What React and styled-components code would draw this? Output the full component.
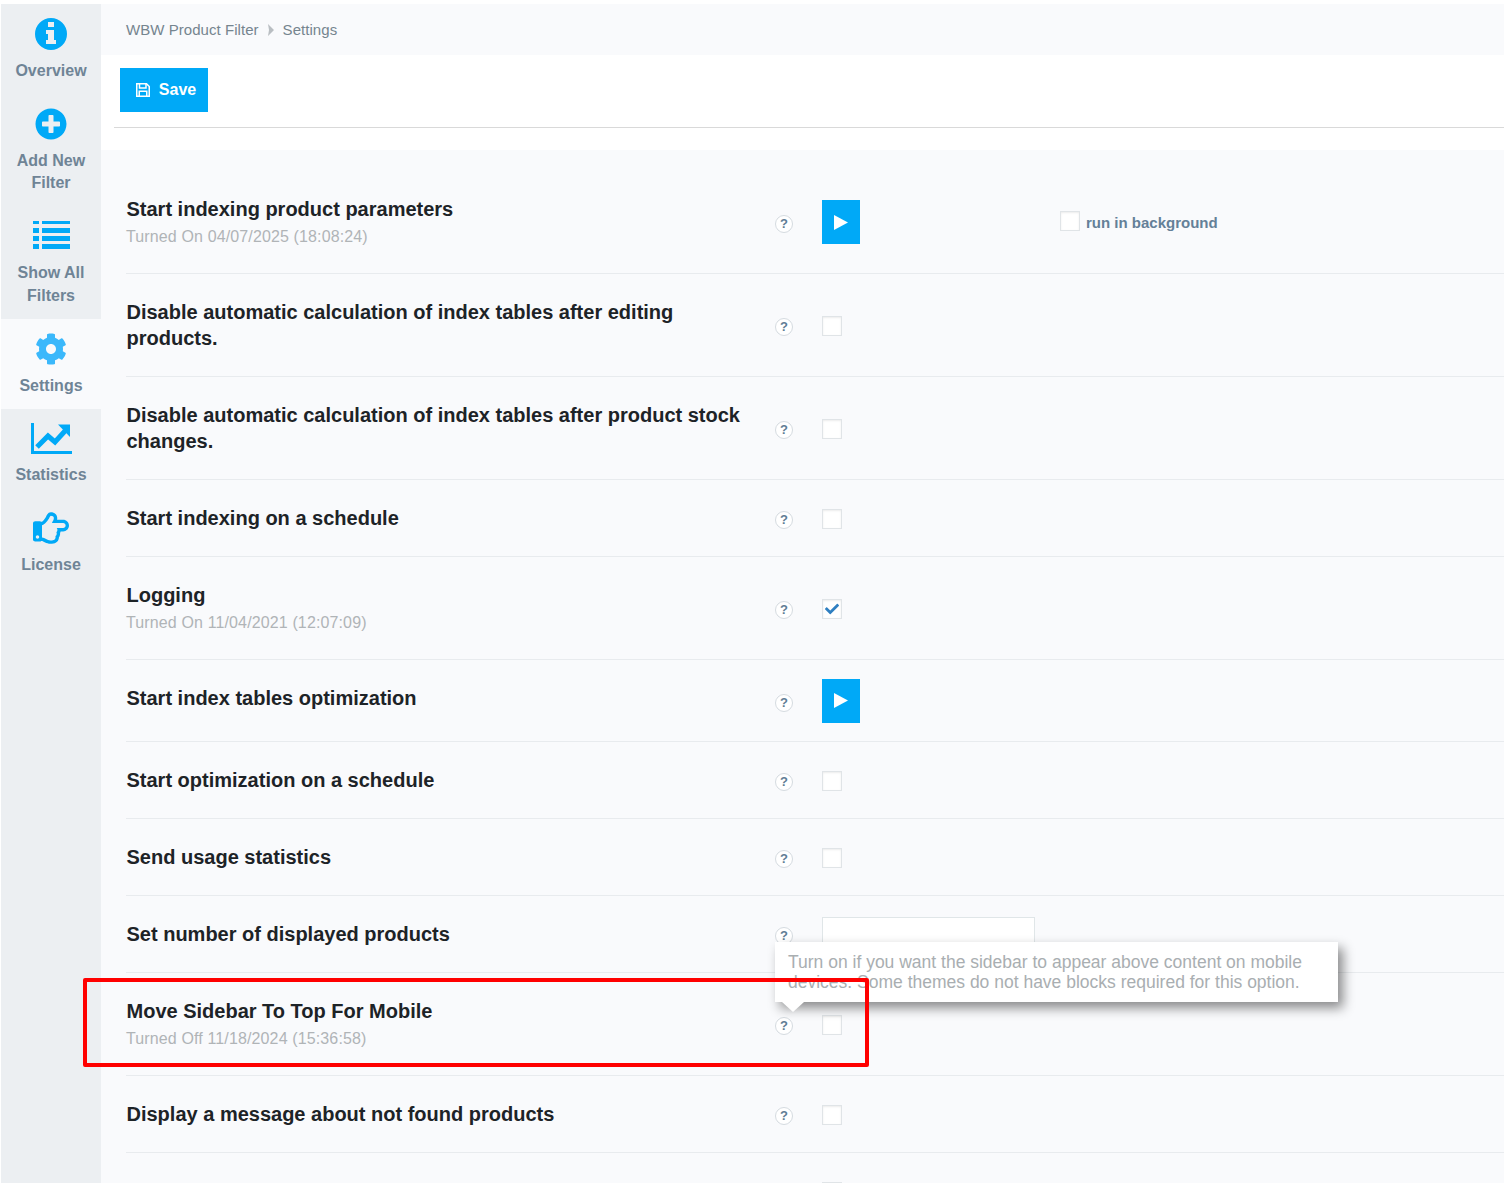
import styled, { createGlobalStyle } from 'styled-components';
import { FaPlusCircle, FaCog, FaRegHandPointRight, FaCheck } from 'react-icons/fa';

const GlobalStyle = createGlobalStyle`
  html, body {
    margin: 0;
    height: 1183px;
    overflow: hidden;
    background: #fff;
  }
  body {
    font-family: "Liberation Sans", Arial, sans-serif;
  }
`;

const Page = styled.div`
  display: flex;
  padding: 4px 0 0 1px;
  height: 1179px;
`;

const Sidebar = styled.nav`
  width: 100px;
  flex-shrink: 0;
  background: #eceff2;
`;

const NavItem = styled.a`
  display: block;
  padding: ${({ $tight }) => ($tight ? '13px' : '14px')} 0 12px;
  text-align: center;
  background: ${({ $active }) => ($active ? '#f9fafc' : 'transparent')};
`;

const NavIcon = styled.div`
  height: 32px;
  display: flex;
  align-items: center;
  justify-content: center;
  color: ${({ $active }) => ($active ? '#3bb8fb' : '#00a9f7')};
`;

const NavLabel = styled.div`
  margin-top: 10px;
  font-size: 16px;
  font-weight: bold;
  line-height: ${({ $loose }) => ($loose ? '22.5px' : '22px')};
  color: #6f8496;
`;

const Main = styled.main`
  flex: 1;
  min-width: 0;
`;

const Breadcrumbs = styled.div`
  height: 51px;
  padding-left: 25px;
  display: flex;
  align-items: center;
  background: #f9fafc;
  font-size: 15px;
  letter-spacing: 0.05px;
  color: #75858f;
`;

const Crumb = styled.span`
  display: block;
`;

const CrumbSep = styled.svg`
  width: 6px;
  height: 12px;
  margin: 0 9px;
  fill: #b9bec2;
`;

const Toolbar = styled.div`
  height: 95px;
  box-sizing: border-box;
  padding-left: 13px;
  background: #fff;
`;

const ToolbarInner = styled.div`
  padding: 13px 0 15px 6px;
  border-bottom: 1px solid #d9d9d9;
`;

const SaveButton = styled.button`
  width: 88px;
  height: 44px;
  border: 0;
  padding: 0 0 0 4px;
  display: flex;
  align-items: center;
  justify-content: center;
  gap: 9px;
  background: #00a9f7;
  color: #fff;
  font: bold 16px "Liberation Sans", Arial, sans-serif;
`;

const Settings = styled.section`
  padding: 21px 0 0 25px;
  background: #f9fafc;
  height: 1033px;
`;

const Row = styled.div`
  position: relative;
  display: flex;
  align-items: center;
  box-sizing: border-box;
  min-height: ${({ $height }) => $height}px;
  border-bottom: 1px solid #e8ebee;
`;

const Info = styled.div`
  width: 649px;
  flex-shrink: 0;
  padding-right: 25px;
  box-sizing: border-box;
  margin-bottom: ${({ $lift }) => ($lift ? '5px' : '0')};
`;

const Title = styled.div`
  padding-left: 0.5px;
  font-size: 20px;
  font-weight: bold;
  line-height: 26px;
  color: #1d2327;
`;

const Sub = styled.div`
  margin: 2px 0 -2px;
  font-size: 16px;
  line-height: 26px;
  letter-spacing: 0.13px;
  color: #b0b4b7;
`;

const HelpWrap = styled.div`
  position: relative;
  width: 18px;
  height: 18px;
  margin: 4px 29px 0 0;
  flex-shrink: 0;
`;

const Help = styled.div`
  width: 18px;
  height: 18px;
  box-sizing: border-box;
  border: 1px solid #d5dbe0;
  border-radius: 50%;
  background: #fff;
  text-align: center;
  font-size: 13px;
  font-weight: bold;
  line-height: 16px;
  color: #5f7d95;
`;

const Tooltip = styled.div`
  position: absolute;
  left: 0;
  bottom: calc(100% + 15px);
  z-index: 2;
  width: 563px;
  height: 60px;
  box-sizing: border-box;
  padding: 10px 13px;
  background: #fff;
  box-shadow: 5px 6px 11px rgba(0, 0, 0, 0.45);
  font-size: 17.5px;
  line-height: 20px;
  color: #a9aeb1;

  &::after {
    content: '';
    position: absolute;
    left: 7px;
    top: 100%;
    border: solid transparent;
    border-width: 10px 11px 0;
    border-top-color: #fff;
  }
`;

const Controls = styled.div`
  display: flex;
  align-items: center;
`;

const PlayButton = styled.button`
  width: 38px;
  height: 44px;
  padding: 0;
  border: 0;
  display: flex;
  align-items: center;
  justify-content: center;
  background: #00a9f7;
`;

const Check = styled.span`
  display: flex;
  align-items: center;
  justify-content: center;
  width: 20px;
  height: 20px;
  margin-top: 2px;
  box-sizing: border-box;
  border: 1px solid #e0e4e7;
  background: #fff;
  box-shadow: inset 0 1px 2px rgba(0, 0, 0, 0.08);
  color: #2f7fc1;
  font-size: 14px;
`;

const BackgroundCheck = styled(Check)`
  margin: 0 0 2px;
`;

const Background = styled.label`
  display: flex;
  align-items: center;
  gap: 6px;
  margin-left: 200px;
  font-size: 15px;
  font-weight: bold;
  color: #648098;
`;

const NumberInput = styled.input`
  display: block;
  width: 213px;
  height: 40px;
  margin-top: 6px;
  box-sizing: border-box;
  border: 1px solid #e0e6e8;
  background: #fff;
  outline: none;
`;

const Highlight = styled.div`
  position: absolute;
  z-index: 3;
  left: -43px;
  top: 5px;
  width: 786px;
  height: 89px;
  box-sizing: border-box;
  border: 4px solid #f00;
  border-radius: 2px;
  pointer-events: none;
`;

const ListSvg = styled.svg`
  margin-bottom: 2px;
`;

const InfoIcon = () => (
  <svg width="32" height="32" viewBox="0 0 32 32" fill="currentColor">
    <path
      fillRule="evenodd"
      d="M16 0a16 16 0 1 1 0 32a16 16 0 1 1 0-32ZM13 4v5h6V4ZM11 12v4h2v6h-2v4h10v-4h-2V12Z"
    />
  </svg>
);

const ListIcon = () => (
  <ListSvg width="37" height="28" viewBox="0 0 37 28" fill="currentColor">
    {[0, 7, 15, 23].map((y, i) => (
      <g key={y}>
        <rect x="0" y={y} width="6" height={i ? 5 : 3} />
        <rect x="9" y={y} width="28" height={i ? 5 : 3} />
      </g>
    ))}
  </ListSvg>
);

const ChartIcon = () => (
  <svg width="41" height="31" viewBox="0 0 41 31" fill="currentColor">
    <rect x="0" y="0" width="3" height="31" />
    <rect x="0" y="28" width="41" height="3" />
    <path d="M6 24 17 13 24 19 34 8" fill="none" stroke="currentColor" strokeWidth="5" />
    <path d="M27 1.500H39V14Z" />
  </svg>
);

const PlayIcon = () => (
  <svg width="14" height="15" viewBox="0 0 14 15" fill="#fff">
    <path d="M0 0 14 7.500 0 15Z" />
  </svg>
);

const SaveIcon = () => (
  <svg width="14" height="14" viewBox="0 0 14 14" fill="none" stroke="currentColor" strokeWidth="1.500">
    <path d="M.75.75H10.500L13.250 3.500V13.250H.75Z" />
    <path d="M3.500 1V5H10V1" />
    <path d="M3.250 13V8.250H10.750V13" />
  </svg>
);

const navItems = [
  { label: ['Overview'], icon: <InfoIcon /> },
  { label: ['Add New', 'Filter'], icon: <FaPlusCircle size={32} /> },
  { label: ['Show All', 'Filters'], icon: <ListIcon />, loose: true },
  { label: ['Settings'], icon: <FaCog size={32} />, active: true },
  { label: ['Statistics'], icon: <ChartIcon />, tight: true },
  { label: ['License'], icon: <FaRegHandPointRight size={36} /> },
];

const rows = [
  { title: 'Start indexing product parameters', sub: 'Turned On 04/07/2025 (18:08:24)', height: 103, control: 'play', background: true },
  { title: 'Disable automatic calculation of index tables after editing products.', height: 103, control: 'check' },
  { title: 'Disable automatic calculation of index tables after product stock changes.', height: 103, control: 'check' },
  { title: 'Start indexing on a schedule', height: 77, control: 'check' },
  { title: 'Logging', sub: 'Turned On 11/04/2021 (12:07:09)', height: 103, control: 'checked' },
  { title: 'Start index tables optimization', height: 82, control: 'play', lift: true },
  { title: 'Start optimization on a schedule', height: 77, control: 'check' },
  { title: 'Send usage statistics', height: 77, control: 'check' },
  { title: 'Set number of displayed products', height: 77, control: 'input' },
  {
    title: 'Move Sidebar To Top For Mobile',
    sub: 'Turned Off 11/18/2024 (15:36:58)',
    height: 103,
    control: 'check',
    tooltip: 'Turn on if you want the sidebar to appear above content on mobile devices. Some themes do not have blocks required for this option.',
    highlight: true,
  },
  { title: 'Display a message about not found products', height: 77, control: 'check' },
  { title: '', height: 77, control: 'check' },
];

function renderControl(control) {
  if (control === 'play') {
    return (
      <PlayButton>
        <PlayIcon />
      </PlayButton>
    );
  }
  if (control === 'input') return <NumberInput />;
  return <Check>{control === 'checked' && <FaCheck />}</Check>;
}

export default function App() {
  return (
    <>
      <GlobalStyle />
      <Page>
        <Sidebar>
          {navItems.map((item) => (
            <NavItem key={item.label[0]} $active={item.active} $tight={item.tight}>
              <NavIcon $active={item.active}>{item.icon}</NavIcon>
              <NavLabel $loose={item.loose}>
                {item.label.map((line) => (
                  <div key={line}>{line}</div>
                ))}
              </NavLabel>
            </NavItem>
          ))}
        </Sidebar>
        <Main>
          <Breadcrumbs>
            <Crumb>WBW Product Filter</Crumb>
            <CrumbSep viewBox="0 0 6 12">
              <path d="M0 0 6 6 0 12 1 6Z" />
            </CrumbSep>
            <Crumb>Settings</Crumb>
          </Breadcrumbs>
          <Toolbar>
            <ToolbarInner>
              <SaveButton>
                <SaveIcon />
                Save
              </SaveButton>
            </ToolbarInner>
          </Toolbar>
          <Settings>
            {rows.map((row) => (
              <Row key={row.title || 'last'} $height={row.height}>
                <Info $lift={row.lift}>
                  <Title>{row.title}</Title>
                  {row.sub && <Sub>{row.sub}</Sub>}
                </Info>
                <HelpWrap>
                  {row.title && <Help>?</Help>}
                  {row.tooltip && <Tooltip>{row.tooltip}</Tooltip>}
                </HelpWrap>
                <Controls>
                  {renderControl(row.control)}
                  {row.background && (
                    <Background>
                      <BackgroundCheck />
                      run in background
                    </Background>
                  )}
                </Controls>
                {row.highlight && <Highlight />}
              </Row>
            ))}
          </Settings>
        </Main>
      </Page>
    </>
  );
}
